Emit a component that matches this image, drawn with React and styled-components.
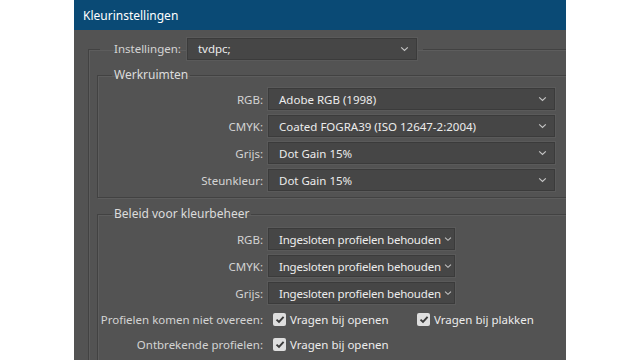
import React from "react";
import styled, { createGlobalStyle } from "styled-components";

const Global = createGlobalStyle`
  html, body {
    margin: 0;
    padding: 0;
    background: #ffffff;
  }
  body {
    font-family: "Noto Sans", "Open Sans", sans-serif;
    font-size: 11.5px;
  }
`;

const Page = styled.div`
  width: 640px;
  height: 360px;
  display: flex;
  justify-content: center;
  overflow: hidden;
`;

const Dialog = styled.div`
  width: 492px;
  height: 360px;
  display: flex;
  flex-direction: column;
  background: #535353;
  overflow: hidden;
`;

const TitleBar = styled.div`
  height: 30px;
  flex: none;
  display: flex;
  align-items: center;
  padding-left: 9px;
  background: #0a4a75;
  color: #ffffff;
  font-size: 12px;
`;

const Body = styled.div`
  padding: 8px 0 0 14px;
`;

const Group = styled.fieldset`
  margin: ${(p) => p.top || 0}px 0 0 0;
  padding: ${(p) => p.pad || "0"};
  border: 1px solid #424242;
  box-shadow: inset 1px 1px 0 #5d5d5d, 1px 1px 0 #5d5d5d;
  min-width: 0;
`;

const OuterGroup = styled(Group)`
  width: 490px;
  padding: 0 0 40px 8px;
`;

const Legend = styled.legend`
  padding: 0 ${(p) => p.right || 2}px 0 ${(p) => p.left || 2}px;
  margin-left: ${(p) => p.shift || 0}px;
  color: #dcdcdc;
  line-height: 16px;
  font-size: 12px;
`;

const SettingLegend = styled(Legend)`
  display: flex;
  align-items: center;
  gap: 6px;
  line-height: 22px;
  font-size: 11.5px;
`;

const Rows = styled.div`
  display: grid;
  grid-template-columns: 165px ${(p) => p.selectw}px;
  column-gap: 5px;
  row-gap: 5px;
  align-items: center;
`;

const Label = styled.div`
  text-align: right;
  color: #d4d4d4;
  white-space: nowrap;
`;

const Select = styled.div`
  height: 22px;
  box-sizing: border-box;
  display: flex;
  align-items: center;
  justify-content: ${(p) => (p.tight ? "flex-start" : "space-between")};
  gap: 3px;
  padding: 0 ${(p) => (p.tight ? 3 : 7)}px 0 10px;
  background: #464646;
  border: 1px solid #3b3b3b;
  box-shadow: 0 0 0 1px #5a5a5a;
  color: #ececec;
  white-space: nowrap;
  overflow: hidden;
  letter-spacing: ${(p) => (p.tight ? "-0.2px" : "0")};
  width: ${(p) => (p.w ? `${p.w}px` : "auto")};
`;

const CheckRow = styled.div`
  height: 20px;
  display: flex;
  align-items: center;
  color: #ececec;
  white-space: nowrap;
`;

const CheckItem = styled.div`
  display: flex;
  align-items: center;
  gap: 4px;
  flex: none;
  width: ${(p) => (p.w ? `${p.w}px` : "auto")};
`;

const Box = styled.span`
  width: 13px;
  height: 13px;
  border-radius: 2px;
  background: #dedede;
  display: inline-flex;
  align-items: center;
  justify-content: center;
  margin-left: 5px;
`;

const Chevron = ({ small }) => (
  <svg width={small ? 8 : 9} height="6" viewBox="0 0 9 6" style={{ flex: "none" }}>
    <path d="M1.2 1.4 L4.5 4.5 L7.8 1.4" fill="none" stroke="#c4c4c4" strokeWidth="1.2" />
  </svg>
);

const Check = () => (
  <Box>
    <svg width="10" height="9" viewBox="0 0 10 9">
      <path d="M1.5 4.6 L4 7 L8.6 1.8" fill="none" stroke="#3a3a3a" strokeWidth="1.9" />
    </svg>
  </Box>
);

const workspaces = [
  ["RGB:", "Adobe RGB (1998)"],
  ["CMYK:", "Coated FOGRA39 (ISO 12647-2:2004)"],
  ["Grijs:", "Dot Gain 15%"],
  ["Steunkleur:", "Dot Gain 15%"],
];

const policies = ["RGB:", "CMYK:", "Grijs:"];

export default function App() {
  return (
    <Page>
      <Global />
      <Dialog>
        <TitleBar>Kleurinstellingen</TitleBar>
        <Body>
          <OuterGroup>
            <SettingLegend shift={3} left={14} right={6}>
              <Label>Instellingen:</Label>
              <Select w={230}>
                <span>tvdpc;</span>
                <Chevron />
              </Select>
            </SettingLegend>

            <Group top={7} pad="5px 8px 6px 0">
              <Legend shift={14} left={2}>Werkruimten</Legend>
              <Rows selectw={287}>
                {workspaces.map(([l, v]) => (
                  <React.Fragment key={l}>
                    <Label>{l}</Label>
                    <Select>
                      <span>{v}</span>
                      <Chevron />
                    </Select>
                  </React.Fragment>
                ))}
              </Rows>
            </Group>

            <Group top={8} pad="6px 8px 20px 0">
              <Legend shift={14} left={2}>Beleid voor kleurbeheer</Legend>
              <Rows selectw={187}>
                {policies.map((l) => (
                  <React.Fragment key={l}>
                    <Label>{l}</Label>
                    <Select tight>
                      <span>Ingesloten profielen behouden</span>
                      <Chevron small />
                    </Select>
                  </React.Fragment>
                ))}
                <Label>Profielen komen niet overeen:</Label>
                <CheckRow>
                  <CheckItem w={144}>
                    <Check />
                    <span>Vragen bij openen</span>
                  </CheckItem>
                  <CheckItem>
                    <Check />
                    <span>Vragen bij plakken</span>
                  </CheckItem>
                </CheckRow>
                <Label>Ontbrekende profielen:</Label>
                <CheckRow>
                  <CheckItem>
                    <Check />
                    <span>Vragen bij openen</span>
                  </CheckItem>
                </CheckRow>
              </Rows>
            </Group>
          </OuterGroup>
        </Body>
      </Dialog>
    </Page>
  );
}
